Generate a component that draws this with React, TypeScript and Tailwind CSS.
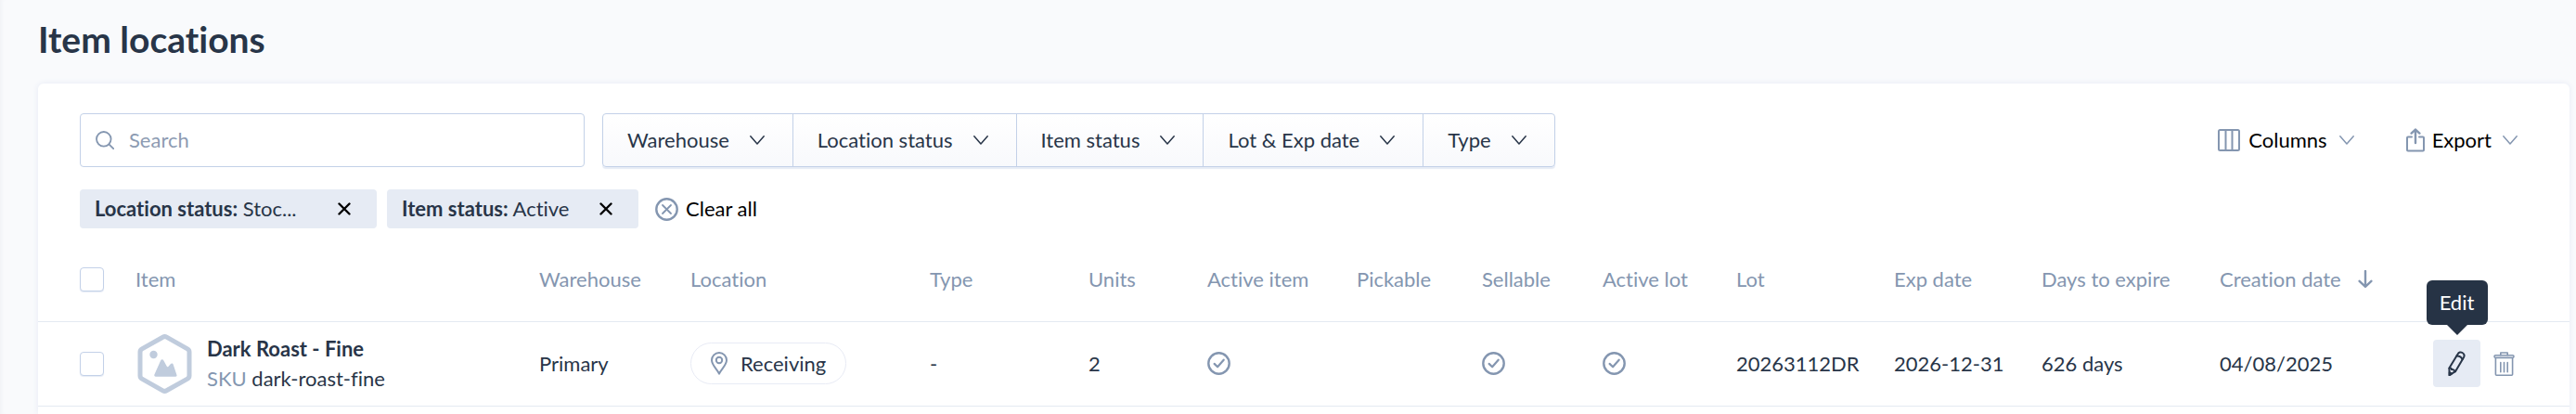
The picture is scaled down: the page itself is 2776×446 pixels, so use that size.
import clsx from 'clsx';
import { useCallback, useState } from 'react';
import type { ReactNode } from 'react';

type Column = {
	name: string;
	label: string;
	width: string;
	sorted?: boolean;
};

type ItemLocation = {
	id: string;
	name: string;
	sku: string;
	warehouse: string;
	location: string;
	type: string;
	units: number;
	activeItem: boolean;
	pickable: boolean;
	sellable: boolean;
	activeLot: boolean;
	lot: string;
	expDate: string;
	daysToExpire: string;
	creationDate: string;
};

const FILTERS = ['Warehouse', 'Location status', 'Item status', 'Lot & Exp date', 'Type'];

const APPLIED_FILTERS = [
	{ label: 'Location status', value: 'Stoc...', width: 'w-80' },
	{ label: 'Item status', value: 'Active', width: 'w-[271px]' },
];

const COLUMNS: Column[] = [
	{ name: 'item', label: 'Item', width: 'w-auto' },
	{ name: 'warehouse', label: 'Warehouse', width: 'w-[163px]' },
	{ name: 'location', label: 'Location', width: 'w-[258px]' },
	{ name: 'type', label: 'Type', width: 'w-[171px]' },
	{ name: 'units', label: 'Units', width: 'w-[128px]' },
	{ name: 'activeItem', label: 'Active item', width: 'w-[161px]' },
	{ name: 'pickable', label: 'Pickable', width: 'w-[135px]' },
	{ name: 'sellable', label: 'Sellable', width: 'w-[130px]' },
	{ name: 'activeLot', label: 'Active lot', width: 'w-[144px]' },
	{ name: 'lot', label: 'Lot', width: 'w-[170px]' },
	{ name: 'expDate', label: 'Exp date', width: 'w-[159px]' },
	{ name: 'daysToExpire', label: 'Days to expire', width: 'w-[192px]' },
	{ name: 'creationDate', label: 'Creation date', width: 'w-[208px]', sorted: true },
];

const ITEMS: ItemLocation[] = [
	{
		id: '1',
		name: 'Dark Roast - Fine',
		sku: 'dark-roast-fine',
		warehouse: 'Primary',
		location: 'Receiving',
		type: '-',
		units: 2,
		activeItem: true,
		pickable: false,
		sellable: true,
		activeLot: true,
		lot: '20263112DR',
		expDate: '2026-12-31',
		daysToExpire: '626 days',
		creationDate: '04/08/2025',
	},
];

type IconProps = {
	className?: string;
	viewBox: string;
	children: ReactNode;
};

function Icon({ className, viewBox, children }: IconProps) {
	return (
		<svg
			aria-hidden="true"
			viewBox={viewBox}
			fill="none"
			stroke="currentColor"
			strokeWidth={2}
			strokeLinecap="round"
			strokeLinejoin="round"
			className={clsx('shrink-0', className)}
		>
			{children}
		</svg>
	);
}

function ChevronIcon({ className }: { className?: string }) {
	return (
		<Icon viewBox="0 0 16 10" className={clsx('h-[10px] w-4', className)}>
			<path d="M.8.8 8 9 15.2.8" strokeWidth={1.5} />
		</Icon>
	);
}

function SearchIcon() {
	return (
		<Icon viewBox="0 0 20 20" className="h-5 w-5 text-[#8496b0]">
			<circle cx="8.8" cy="8.8" r="7.8" strokeWidth={1.8} />
			<path d="m14.4 14.4 4.8 4.8" strokeWidth={1.8} />
		</Icon>
	);
}

function CheckIcon() {
	return (
		<Icon viewBox="0 0 25 25" className="h-[25px] w-[25px] text-[#8496b0]">
			<circle cx="12.5" cy="12.5" r="11.2" strokeWidth={2.4} />
			<path d="m7.6 12.9 3.5 3.4 6.6-7.6" strokeWidth={2.2} />
		</Icon>
	);
}

function ClearIcon() {
	return (
		<Icon viewBox="0 0 25 25" className="h-[25px] w-[25px] text-[#8496b0]">
			<circle cx="12.5" cy="12.5" r="11.2" strokeWidth={2.4} />
			<path d="m8 8 9 9M17 8l-9 9" strokeWidth={1.8} />
		</Icon>
	);
}

function ColumnsIcon() {
	return (
		<Icon viewBox="0 0 24 24" className="h-6 w-6 text-[#8496b0]">
			<rect x="1" y="1" width="22" height="22" rx="1.5" />
			<path d="M8.5 1v22M15.5 1v22" />
		</Icon>
	);
}

function ExportIcon() {
	return (
		<Icon viewBox="0 0 20 26" className="h-[26px] w-5 text-[#8496b0]">
			<path d="M6 9.4H2a1 1 0 0 0-1 1v13a1 1 0 0 0 1 1h16a1 1 0 0 0 1-1v-13a1 1 0 0 0-1-1h-4" />
			<path d="M10 16V2" strokeWidth={2.4} />
			<path d="m5.6 5.6 4.4-4 4.4 4" strokeWidth={2.4} />
		</Icon>
	);
}

function PinIcon() {
	return (
		<Icon viewBox="0 0 18 25" className="h-[25px] w-[18px] text-[#8496b0]">
			<path d="M9 23.6C7.6 19.6 1 14.6 1 9a8 8 0 0 1 16 0c0 5.6-6.6 10.6-8 14.6Z" />
			<circle cx="9" cy="9" r="3.2" />
		</Icon>
	);
}

function PencilIcon() {
	return (
		<Icon viewBox="0 0 19 27" className="h-[27px] w-[19px] text-[#283548]">
			<path d="M1.4 18.6 10.7 3.3c1-1.8 3-2.4 4.9-1.3s2.4 3.1 1.4 4.9L8 22.2l-6.4 4Z" />
			<path d="M9.4 5.6c2.6-.2 5 1.1 6.2 3.6M1.4 18.6c1.2-.4 2.4.1 2.6 1.5 1.7-.3 3 .6 4 2.1" />
			<path d="m1.6 26.2.1-3 2.2 1.5Z" fill="currentColor" />
		</Icon>
	);
}

function TrashIcon() {
	return (
		<Icon viewBox="0 0 23 26" className="h-[26px] w-[23px] text-[#8496b0]">
			<path d="M7.8 3.8V1h7.4v2.8" strokeWidth={1.6} />
			<rect x="1" y="3.8" width="21" height="2.6" rx="1.3" strokeWidth={1.6} />
			<path d="M2.4 6.8v17.4a1 1 0 0 0 1 1h16.2a1 1 0 0 0 1-1V6.8" strokeWidth={1.6} />
			<path d="M7.8 11.5v10.3M11.5 11.5v10.3M15.2 11.5v10.3" strokeWidth={1.6} />
		</Icon>
	);
}

function SortIcon() {
	return (
		<Icon viewBox="0 0 16 20" className="h-5 w-4 text-[#8496b0]">
			<path d="M8 1v16M1.6 11.8 8 17.8l6.4-6" strokeWidth={2.4} />
		</Icon>
	);
}

function ItemPlaceholder() {
	return (
		<svg aria-hidden="true" viewBox="0 0 59 64" className="h-16 w-[59px] shrink-0 text-[#c0ccdd]">
			<path
				d="M27.5 3.2a4 4 0 0 1 4 0l22.5 12.7a4 4 0 0 1 2 3.5v25.2a4 4 0 0 1-2 3.5L31.5 60.8a4 4 0 0 1-4 0L5 48.1a4 4 0 0 1-2-3.5V19.4a4 4 0 0 1 2-3.5Z"
				fill="none"
				stroke="currentColor"
				strokeWidth={5}
			/>
			<circle cx="17.5" cy="22" r="4.2" fill="currentColor" />
			<path
				d="m18.4 43.6 6.7-15.2c.7-1.6 2.5-1.6 3.3 0l3.3 6.2c.5.9 1.2.9 1.8.2l2.2-2.5c1.1-1.2 2.7-.9 3.1.7l3.6 10.8c.5 1.2-.1 2-1.2 2H19.8c-1.2 0-1.9-1-1.4-2.2Z"
				fill="currentColor"
			/>
		</svg>
	);
}

function Checkbox({ label, checked, onChange }: { label: string; checked: boolean; onChange: () => void }) {
	return (
		<input
			type="checkbox"
			aria-label={label}
			checked={checked}
			onChange={onChange}
			className="block h-[26px] w-[26px] appearance-none rounded border border-[#c3d1e8] bg-white shadow-[0_1px_1px_#e6ebf5] checked:bg-[#8496b0]"
		/>
	);
}

function AppliedFilter({ label, value, width }: { label: string; value: string; width: string }) {
	return (
		<div
			className={clsx('flex h-[42px] items-center justify-between rounded bg-[#e6ebf4] pr-7 pl-4 text-[#283548]', width)}
		>
			<span className="whitespace-nowrap">
				<strong className="font-bold">{label}:</strong> {value}
			</span>
			<button type="button" aria-label={`Remove ${label}`} className="text-black">
				<Icon viewBox="0 0 14 14" className="h-[14px] w-[14px]">
					<path d="m1.5 1.5 11 11M12.5 1.5l-11 11" strokeWidth={2.4} />
				</Icon>
			</button>
		</div>
	);
}

export default function App() {
	const [search, setSearch] = useState('');
	const [selected, setSelected] = useState<string[]>([]);

	const toggleItem = useCallback(
		(id: string) => () => {
			setSelected(prev => (prev.includes(id) ? prev.filter(item => item !== id) : [...prev, id]));
		},
		[],
	);

	const toggleAll = useCallback(() => {
		setSelected(prev => (prev.length === ITEMS.length ? [] : ITEMS.map(item => item.id)));
	}, []);

	return (
		<main className="flex min-h-screen flex-col bg-[#f9fafc] pr-[7px] pl-[41px] font-['Lato',sans-serif] text-[22px] leading-8 text-[#283548] shadow-[inset_4px_0_4px_-3px_#eef0f4] [font-variant-ligatures:none]">
			<h1 className="pt-[18px] pb-6 text-[39px] leading-[48px] font-bold">Item locations</h1>

			<section className="flex-1 rounded-t-md bg-white shadow-[0_0_6px_#e6eaf5]">
				<div className="flex items-center justify-between pt-8 pr-14 pl-[45px]">
					<div className="flex gap-[19px]">
						<label className="flex h-[58px] w-[544px] items-center gap-4 rounded border border-[#c3d1e8] pr-4 pl-4">
							<SearchIcon />
							<input
								type="text"
								aria-label="Search"
								placeholder="Search"
								value={search}
								onChange={e => setSearch(e.target.value)}
								className="w-full outline-none placeholder:text-[#8d9bb2]"
							/>
						</label>
						<div className="flex h-[58px] divide-x divide-[#c3d1e8] rounded border border-[#c3d1e8] bg-linear-to-b from-white to-[#f8f9fc] shadow-[0_2px_1px_#e6ebf5]">
							{FILTERS.map(filter => (
								<button key={filter} type="button" className="flex items-center gap-[22px] pr-[30px] pl-[26px]">
									{filter}
									<ChevronIcon />
								</button>
							))}
						</div>
					</div>
					<div className="flex items-center gap-14 text-black">
						<button type="button" className="flex items-center gap-[9px]">
							<ColumnsIcon />
							Columns
							<ChevronIcon className="ml-1 text-[#8496b0]" />
						</button>
						<button type="button" className="flex items-center gap-2">
							<ExportIcon />
							Export
							<ChevronIcon className="ml-1 text-[#8496b0]" />
						</button>
					</div>
				</div>

				<div className="flex items-center gap-[11px] pt-6 pl-[45px]">
					{APPLIED_FILTERS.map(filter => (
						<AppliedFilter key={filter.label} {...filter} />
					))}
					<button type="button" className="ml-[7px] flex items-center gap-2 text-black">
						<ClearIcon />
						Clear all
					</button>
				</div>

				<table className="mt-[10px] w-full table-fixed text-left">
					<thead>
						<tr className="h-[90px] border-b border-[#e4eaf2] text-[#8496b0]">
							<th className="w-[105px] pl-[45px]">
								<Checkbox
									label="Select all items"
									checked={selected.length === ITEMS.length}
									onChange={toggleAll}
								/>
							</th>
							{COLUMNS.map(column => (
								<th key={column.name} scope="col" className={clsx('font-normal whitespace-nowrap', column.width)}>
									{column.sorted ? (
										<button type="button" className="flex items-center gap-[18px]">
											{column.label}
											<SortIcon />
										</button>
									) : (
										column.label
									)}
								</th>
							))}
							<th className="w-[169px]" aria-label="Actions" />
						</tr>
					</thead>
					<tbody>
						{ITEMS.map(item => (
							<tr key={item.id} className="h-[91px] border-b border-[#e4eaf2]">
								<td className="pl-[45px]">
									<Checkbox
										label={`Select ${item.name}`}
										checked={selected.includes(item.id)}
										onChange={toggleItem(item.id)}
									/>
								</td>
								<td>
									<div className="flex items-center gap-4 pl-[2px]">
										<ItemPlaceholder />
										<div>
											<div className="font-bold">{item.name}</div>
											<div>
												<span className="text-[#8496b0]">SKU</span> {item.sku}
											</div>
										</div>
									</div>
								</td>
								<td>{item.warehouse}</td>
								<td>
									<span className="inline-flex h-[45px] items-center gap-[14px] rounded-full border border-[#e8ebf5] px-[21px] align-middle">
										<PinIcon />
										{item.location}
									</span>
								</td>
								<td>{item.type}</td>
								<td>{item.units}</td>
								<td>{item.activeItem && <CheckIcon />}</td>
								<td>{item.pickable && <CheckIcon />}</td>
								<td>{item.sellable && <CheckIcon />}</td>
								<td>{item.activeLot && <CheckIcon />}</td>
								<td>{item.lot}</td>
								<td>{item.expDate}</td>
								<td>{item.daysToExpire}</td>
								<td>{item.creationDate}</td>
								<td>
									<div className="flex items-center justify-end gap-[14px] pr-[59px]">
										<div className="relative">
											<button
												type="button"
												aria-label="Edit"
												aria-describedby={`edit-${item.id}`}
												className="flex h-[51px] w-[51px] items-center justify-center rounded bg-[#e6ebf4]"
											>
												<PencilIcon />
											</button>
											<div
												id={`edit-${item.id}`}
												role="tooltip"
												className="absolute bottom-full left-1/2 mb-4 flex h-12 w-[66px] -translate-x-1/2 items-center justify-center rounded-md bg-[#263345] text-white"
											>
												Edit
												<svg
													aria-hidden="true"
													viewBox="0 0 22 11"
													className="absolute top-full left-1/2 h-[11px] w-[22px] -translate-x-1/2 fill-[#263345]"
												>
													<path d="M0 0h22L11 11Z" />
												</svg>
											</div>
										</div>
										<button type="button" aria-label="Delete">
											<TrashIcon />
										</button>
									</div>
								</td>
							</tr>
						))}
					</tbody>
				</table>
			</section>
		</main>
	);
}
